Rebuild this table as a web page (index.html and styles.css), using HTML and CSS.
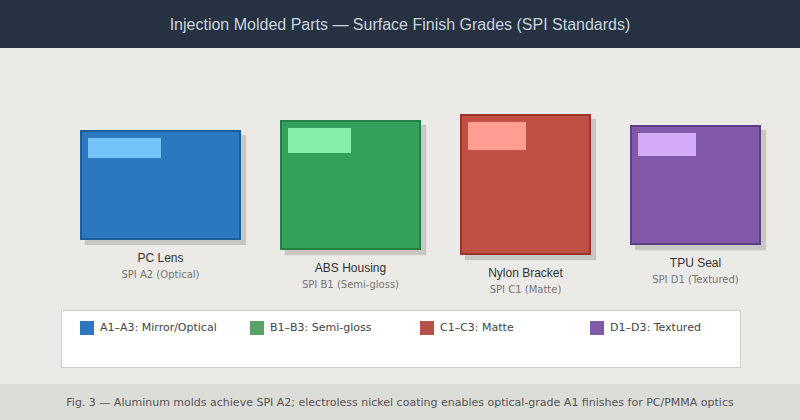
FILE: index.html
```html
<!DOCTYPE html>
<html lang="en">
<head>
<meta charset="utf-8">
<title>Surface Finish Grades</title>
<link rel="stylesheet" href="styles.css">
</head>
<body>
<header class="header">Injection Molded Parts — Surface Finish Grades (SPI Standards)</header>
<main class="main">
  <section class="parts">
    <div class="part">
      <div class="box box-a"><div class="shine"></div></div>
      <div class="name">PC Lens</div>
      <div class="grade">SPI A2 (Optical)</div>
    </div>
    <div class="part">
      <div class="box box-b"><div class="shine"></div></div>
      <div class="name">ABS Housing</div>
      <div class="grade">SPI B1 (Semi-gloss)</div>
    </div>
    <div class="part">
      <div class="box box-c"><div class="shine"></div></div>
      <div class="name">Nylon Bracket</div>
      <div class="grade">SPI C1 (Matte)</div>
    </div>
    <div class="part">
      <div class="box box-d"><div class="shine"></div></div>
      <div class="name">TPU Seal</div>
      <div class="grade">SPI D1 (Textured)</div>
    </div>
  </section>
  <section class="legend">
    <div class="item"><span class="swatch sw-a"></span>A1–A3: Mirror/Optical</div>
    <div class="item"><span class="swatch sw-b"></span>B1–B3: Semi-gloss</div>
    <div class="item"><span class="swatch sw-c"></span>C1–C3: Matte</div>
    <div class="item"><span class="swatch sw-d"></span>D1–D3: Textured</div>
  </section>
</main>
<footer class="caption">Fig. 3 — Aluminum molds achieve SPI A2; electroless nickel coating enables optical-grade A1 finishes for PC/PMMA optics</footer>
</body>
</html>
```
FILE: styles.css
```css
* { box-sizing: border-box; }
html, body { margin: 0; padding: 0; }
body {
  width: 800px;
  height: 420px;
  overflow: hidden;
  background: #ebeae6;
  font-family: "DejaVu Sans", sans-serif;
}
.header {
  height: 48px;
  background: #263241;
  color: #c9d2dd;
  font-family: "Liberation Sans", Arial, sans-serif;
  font-size: 16px;
  line-height: 49px;
  text-align: center;
}
.main {
  height: 336px;
  padding-top: 52px;
}
.parts {
  height: 210px;
  display: flex;
  align-items: center;
  gap: 39px;
  padding-left: 80px;
}
.part {
  display: flex;
  flex-direction: column;
  align-items: center;
}
.box {
  border: 2px solid;
  padding: 6px;
  box-shadow: 5px 5px 1px rgba(0, 0, 0, 0.15);
}
.box-a { width: 161px; height: 110px; background: #2b78be; border-color: #1c5d9b; }
.box-b { width: 141px; height: 130px; background: #34a15b; border-color: #237f46; }
.box-c { width: 131px; height: 141px; background: #c05044; border-color: #9c3529; }
.box-d { width: 131px; height: 120px; background: #8059a8; border-color: #5e3e86; }
.box-a .shine { width: 73px; height: 20px; background: #75c3fb; }
.box-b .shine { width: 63px; height: 25px; background: #86efa8; }
.box-c .shine { width: 58px; height: 28px; background: #fe9e90; }
.box-d .shine { width: 58px; height: 23px; background: #d4a9f8; }
.name {
  margin-top: 11px;
  height: 14px;
  line-height: 14px;
  font-family: "Liberation Sans", Arial, sans-serif;
  font-size: 12px;
  color: #333;
  white-space: nowrap;
}
.grade {
  margin-top: 4px;
  height: 12px;
  line-height: 12px;
  font-size: 10px;
  color: #777;
  white-space: nowrap;
}
.legend {
  margin-left: 61px;
  width: 680px;
  height: 58px;
  background: #fff;
  border: 1px solid #ccc;
  display: flex;
  align-items: flex-start;
  padding: 10px 0 0 18px;
  overflow: hidden;
}
.item {
  flex: none;
  width: 170px;
  display: flex;
  align-items: center;
  gap: 6px;
  font-size: 11px;
  color: #444;
  line-height: 14px;
  white-space: nowrap;
}
.swatch { width: 14px; height: 14px; flex: none; }
.sw-a { background: #2b78be; }
.sw-b { background: #55a366; }
.sw-c { background: #b5524a; }
.sw-d { background: #7f5aa8; }
.caption {
  height: 36px;
  background: #dcdcd8;
  color: #555;
  font-size: 11px;
  line-height: 37px;
  text-align: center;
  white-space: nowrap;
}
```
